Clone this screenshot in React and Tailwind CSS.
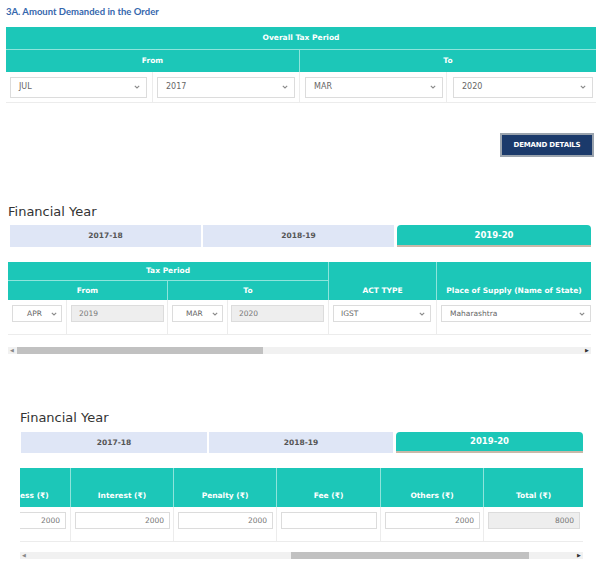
import { useState } from 'react'

const TEAL = 'bg-[#1cc7b8]'

function Chevron() {
  return (
    <svg width="6" height="4" viewBox="0 0 6 4" className="shrink-0">
      <path d="M0.8 0.8l2.2 2.2L5.2 0.8" stroke="#8a8a8a" strokeWidth="1.1" fill="none" />
    </svg>
  )
}

function Sel({ value, className = '' }) {
  return (
    <div className={`flex items-center justify-between border border-[#dcdcdc] bg-white text-[#666] ${className}`}>
      <span>{value}</span>
      <Chevron />
    </div>
  )
}

function Box({ value, grey, className = '' }) {
  return (
    <div className={`flex items-center border border-[#dcdcdc] text-[#777] ${grey ? 'bg-[#eeeeee]' : 'bg-white'} ${className}`}>
      {value}
    </div>
  )
}

function Tabs({ widths, gap1, gap2, height, active = 2 }) {
  const years = ['2017-18', '2018-19', '2019-20']
  return (
    <div className="flex">
      {years.map((y, i) => (
        <div
          key={y}
          style={{ width: widths[i], height, marginLeft: i === 1 ? gap1 : i === 2 ? gap2 : 0 }}
          className={
            i === active
              ? `${TEAL} flex items-center justify-center rounded-t-[4px] border-b-2 border-[#c9b9a9] text-white font-bold text-[8.5px]`
              : 'bg-[#dfe6f6] flex items-center justify-center text-[#555] font-bold text-[7.5px]'
          }
        >
          {y}
        </div>
      ))}
    </div>
  )
}

function Scrollbar({ width, thumbLeft, thumbWidth }) {
  return (
    <div className="flex items-center h-[7px] bg-[#f1f1f1]" style={{ width }}>
      <span className="w-[8px] text-[5px] text-[#888] text-center leading-none">◀</span>
      <div className="flex-1 h-full flex">
        <div style={{ width: thumbLeft }} />
        <div className="h-full bg-[#c1c1c1]" style={{ width: thumbWidth }} />
      </div>
      <span className="w-[8px] text-[5px] text-[#333] text-center leading-none">▶</span>
    </div>
  )
}

export default function App() {
  const [tab] = useState(2)
  const body = { fontFamily: '"DejaVu Sans", Verdana, sans-serif' }

  return (
    <div className="w-[600px] h-[568px] bg-white overflow-hidden" style={body}>
      {/* 3A */}
      <div className="px-[6px] pt-[6px]">
        <div className="h-[12px] text-[9.5px] font-bold text-[#3567ad] leading-[12px]" style={{ fontFamily: 'Lato, sans-serif' }}>
          3A. Amount Demanded in the Order
        </div>
        <div className="mt-[9px] w-[590px] grid grid-cols-[147px_147px_147px_149px] text-[7.5px]">
          <div className={`col-span-4 h-[23px] ${TEAL} border-b border-[#8ee4db] flex items-center justify-center text-white font-bold`}>Overall Tax Period</div>
          <div className={`col-span-2 h-[22px] ${TEAL} border-r border-[#8ee4db] flex items-center justify-center text-white font-bold`}>From</div>
          <div className={`col-span-2 h-[22px] ${TEAL} flex items-center justify-center text-white font-bold`}>To</div>
          <div className="h-[31px] border-r border-b border-[#ececec] pl-[4px] pr-[5px] flex items-center"><Sel value="JUL" className="w-full h-[21px] px-[8px] pr-[6px] text-[8px]" /></div>
          <div className="h-[31px] border-r border-b border-[#ececec] pl-[4px] pr-[4px] flex items-center"><Sel value="2017" className="w-full h-[21px] px-[8px] pr-[6px] text-[8px]" /></div>
          <div className="h-[31px] border-r border-b border-[#ececec] pl-[5px] pr-[3px] flex items-center"><Sel value="MAR" className="w-full h-[21px] px-[8px] pr-[6px] text-[8px]" /></div>
          <div className="h-[31px] border-b border-[#ececec] pl-[6px] pr-[3px] flex items-center"><Sel value="2020" className="w-full h-[21px] px-[8px] pr-[6px] text-[8px]" /></div>
        </div>
        <div className="mt-[30px] flex justify-end">
          <button className="w-[94px] h-[24px] bg-[#1b3a6b] border-2 border-[#9aa3ad] text-white text-[7px] font-bold tracking-tight">
            DEMAND DETAILS
          </button>
        </div>
      </div>

      {/* Financial Year 1 */}
      <div className="pl-[8px] mt-[46px]">
        <div className="h-[17px] text-[13px] text-[#333] leading-[17px]">Financial Year</div>
        <div className="mt-[5px] pl-[2px]">
          <Tabs widths={[191, 191, 194]} gap1={2} gap2={3} height={22} active={tab} />
        </div>
        <div className="mt-[15px] w-[583px] grid grid-cols-[59px_101px_60px_101px_108px_154px] grid-rows-[19px_19px_35px] text-[7.5px]">
          <div className={`col-span-4 ${TEAL} border-b border-r border-[#8ee4db] flex items-center justify-center text-white font-bold`}>Tax Period</div>
          <div className={`row-span-2 ${TEAL} border-r border-[#8ee4db] flex items-end justify-center pb-[4px] text-white font-bold`}>ACT TYPE</div>
          <div className={`row-span-2 ${TEAL} flex items-end justify-center pb-[4px] text-white font-bold`}>Place of Supply (Name of State)</div>
          <div className={`col-span-2 ${TEAL} border-r border-[#8ee4db] flex items-center justify-center text-white font-bold`}>From</div>
          <div className={`col-span-2 ${TEAL} border-r border-[#8ee4db] flex items-center justify-center text-white font-bold`}>To</div>
          <div className="border-r border-b border-[#ececec] px-[4px] pt-[5px]"><Sel value="APR" className="h-[17px] pl-[14px] pr-[4px]" /></div>
          <div className="border-r border-b border-[#ececec] pl-[4px] pr-[3px] pt-[5px]"><Box value="2019" grey className="h-[17px] px-[7px]" /></div>
          <div className="border-r border-b border-[#ececec] pl-[4px] pr-[4px] pt-[5px]"><Sel value="MAR" className="h-[17px] pl-[13px] pr-[4px]" /></div>
          <div className="border-r border-b border-[#ececec] pl-[3px] pr-[4px] pt-[5px]"><Box value="2020" grey className="h-[17px] px-[7px]" /></div>
          <div className="border-r border-b border-[#ececec] pl-[4px] pr-[5px] pt-[5px]"><Sel value="IGST" className="h-[17px] px-[7px] pr-[5px]" /></div>
          <div className="border-b border-[#ececec] pl-[4px] pt-[5px]"><Sel value="Maharashtra" className="h-[17px] px-[8px] pr-[5px]" /></div>
        </div>
        <div className="mt-[12px]">
          <Scrollbar width={583} thumbLeft={1} thumbWidth={246} />
        </div>
      </div>

      {/* Financial Year 2 */}
      <div className="pl-[20px] mt-[55px]">
        <div className="h-[17px] text-[13px] text-[#333] leading-[17px]">Financial Year</div>
        <div className="mt-[6px] pl-[1px]">
          <Tabs widths={[186, 184, 187]} gap1={2} gap2={3} height={21} active={tab} />
        </div>
        <div className="mt-[15px] w-[563px] grid grid-cols-[51px_103px_103px_104px_103px_99px] grid-rows-[39px_35px] text-[7.5px]">
          {['ess (₹)', 'Interest (₹)', 'Penalty (₹)', 'Fee (₹)', 'Others (₹)', 'Total (₹)'].map((h, i) => (
            <div
              key={h}
              className={`${TEAL} ${i < 5 ? 'border-r border-[#8ee4db]' : ''} flex items-end ${i === 0 ? 'justify-start' : 'justify-center'} pb-[6px] text-white font-bold`}
            >
              {h}
            </div>
          ))}
          {['2000', '2000', '2000', '', '2000', '8000'].map((v, i) => (
            <div
              key={i}
              className={`${i < 5 ? 'border-r' : ''} border-b border-[#ececec] pt-[5px] ${i === 0 ? 'pr-[4px]' : 'pl-[4px] pr-[3px]'}`}
            >
              <Box value={v} grey={i === 5} className={`h-[17px] justify-end px-[5px] ${i === 0 ? 'border-l-0' : ''}`} />
            </div>
          ))}
        </div>
        <div className="mt-[10px]">
          <Scrollbar width={563} thumbLeft={263} thumbWidth={238} />
        </div>
      </div>
    </div>
  )
}
